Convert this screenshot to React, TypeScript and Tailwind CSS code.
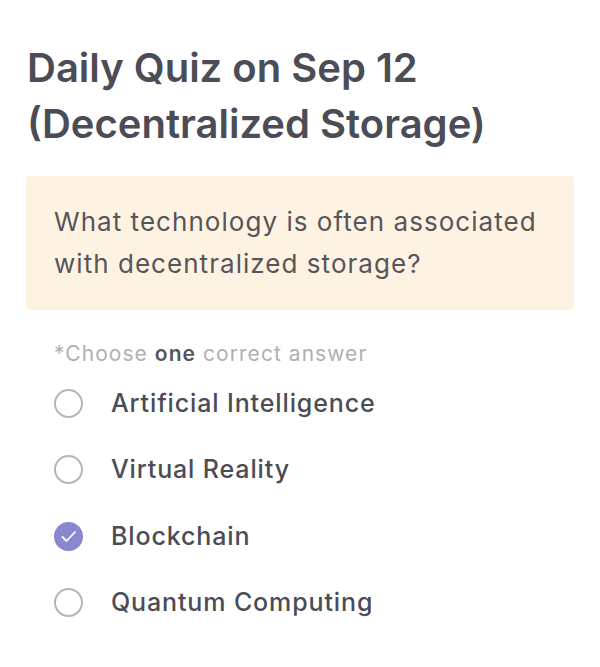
import React, { useState } from 'react';

const options = [
  'Artificial Intelligence',
  'Virtual Reality',
  'Blockchain',
  'Quantum Computing',
];

export default function App() {
  const [selected, setSelected] = useState(2);

  return (
    <div
      className="min-h-[667px] w-[600px] bg-white px-[26px] pt-[40px]"
      style={{ fontFamily: 'Inter, "Noto Sans", sans-serif' }}
    >
      <h1 className="pl-[1px] text-[40px] font-semibold leading-[56px] text-[#4b4c55]">
        Daily Quiz on Sep 12
        <br />
        (Decentralized Storage)
      </h1>

      <div className="mt-[24px] rounded-[3px] bg-[#fef3e2] px-[28px] py-[25px]">
        <p className="text-[26px] leading-[42px] tracking-[0.04em] text-[#55555a]">
          What technology is often associated with decentralized storage?
        </p>
      </div>

      <p className="mt-[30px] pl-[28px] text-[21px] leading-[28px] tracking-[0.05em] text-[#b0b0b0]">
        *Choose <span className="font-semibold text-[#55555a]">one</span> correct answer
      </p>

      <ul className="mt-[2px] flex flex-col">
        {options.map((opt, i) => {
          const checked = selected === i;
          return (
            <li key={opt}>
              <button
                onClick={() => setSelected(i)}
                className="flex h-[66.5px] w-full items-center gap-[28px] pl-[28px] text-left"
              >
                {checked ? (
                  <span className="flex h-[29px] w-[29px] items-center justify-center rounded-full bg-[#8a86cf]">
                    <svg width="29" height="29" viewBox="0 0 29 29" fill="none" stroke="white" strokeWidth="1.8" strokeLinecap="round" strokeLinejoin="round">
                      <path d="M8.5 15l4 4L21 10" />
                    </svg>
                  </span>
                ) : (
                  <span className="h-[29px] w-[29px] rounded-full border-[2px] border-[#b5b5b5] bg-white" />
                )}
                <span className="text-[25px] font-medium tracking-[0.035em] text-[#4b4c55]">{opt}</span>
              </button>
            </li>
          );
        })}
      </ul>
    </div>
  );
}
